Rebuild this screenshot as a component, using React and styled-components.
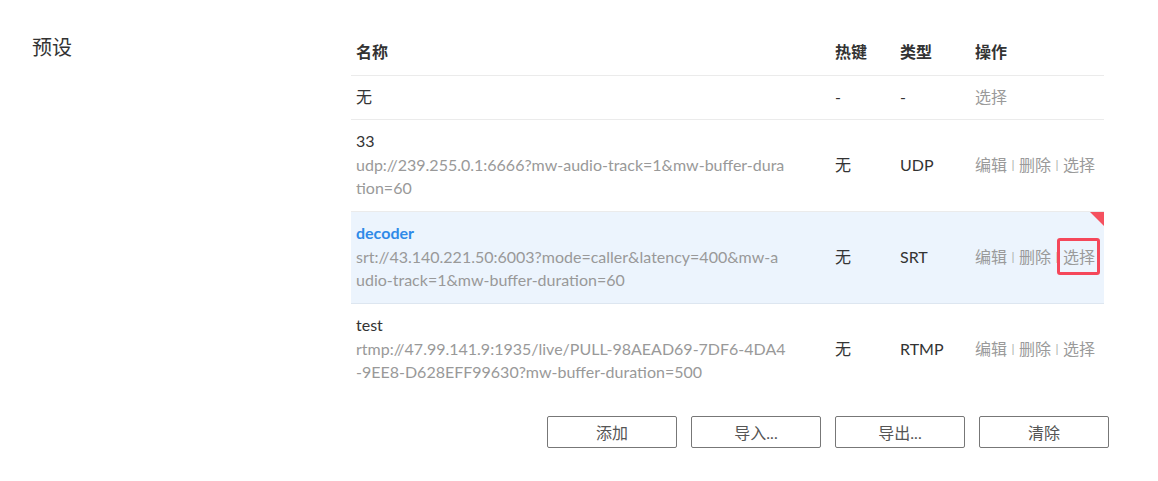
import React from "react";
import styled, { createGlobalStyle, css } from "styled-components";

const Global = createGlobalStyle`
  html, body { margin: 0; padding: 0; background: #fff; }
  body {
    font-family: Lato, "Noto Sans CJK SC", sans-serif;
    font-size: 16px;
    color: #333;
  }
`;

const Page = styled.div`
  display: flex;
  padding: 32px 0 0 32px;
  width: 1158px;
  box-sizing: border-box;
`;

const SectionLabel = styled.div`
  width: 319px;
  flex: none;
  font-size: 20px;
  line-height: 30px;
  color: #333;
`;

const Content = styled.div`
  width: 758px;
  display: flex;
  flex-direction: column;
`;

const Table = styled.div`
  width: 753px;
  display: flex;
  flex-direction: column;
`;

const Row = styled.div`
  position: relative;
  display: grid;
  grid-template-columns: 479px 65px 75px 134px;
  align-items: center;
  border-bottom: 1px solid #ebebeb;
  ${(p) =>
    p.$active &&
    css`
      background: #ecf4fd;
      border-bottom-color: #dde6f0;
    `}
  ${(p) =>
    p.$last &&
    css`
      border-bottom-color: transparent;
    `}
`;

const Corner = styled.span`
  position: absolute;
  top: 0;
  right: 0;
  width: 0;
  height: 0;
  border-top: 14px solid #f5515f;
  border-left: 14px solid transparent;
`;

const Cell = styled.div`
  padding: 9px 5px 11px;
  line-height: 23px;
  color: #333;
  white-space: nowrap;
`;

const HeadCell = styled(Cell)`
  padding: 8px 5px 12px;
  font-weight: 700;
`;

const NameCell = styled.div`
  padding: 9px 5px 12px;
  display: flex;
  flex-direction: column;
`;

const Name = styled.div`
  line-height: 23px;
  margin-bottom: 1px;
  color: ${(p) => (p.$active ? "#2f8ae8" : "#333")};
  font-weight: ${(p) => (p.$active ? 700 : 400)};
`;

const Url = styled.div`
  max-width: 430px;
  line-height: 23px;
  color: #999;
  word-break: break-all;
`;

const Actions = styled.div`
  padding: 9px 5px 11px;
  line-height: 23px;
  color: #9a9a9a;
  white-space: nowrap;
  display: flex;
  align-items: center;
`;

const Action = styled.span`
  position: relative;
  cursor: pointer;
  ${(p) =>
    p.$marked &&
    css`
      &::after {
        content: "";
        position: absolute;
        left: -6px;
        right: -5px;
        top: -7px;
        bottom: -7px;
        border: 3px solid #f5475a;
        border-radius: 3px;
      }
    `}
`;

const Sep = styled.span`
  font-size: 12px;
  color: #aaa;
  margin: 0 4.5px;
`;

const ButtonBar = styled.div`
  display: flex;
  justify-content: flex-end;
  gap: 14px;
  margin-top: 20px;
`;

const Button = styled.button`
  width: 130px;
  height: 32px;
  box-sizing: border-box;
  border: 1px solid #777;
  border-radius: 2px;
  background: #fff;
  color: #555;
  font-family: Lato, "Noto Sans CJK SC", sans-serif;
  font-size: 16px;
  padding: 0;
  cursor: pointer;
`;

const rows = [
  {
    name: "33",
    url: "udp://239.255.0.1:6666?mw-audio-track=1&mw-buffer-duration=60",
    key: "无",
    type: "UDP",
  },
  {
    name: "decoder",
    url: "srt://43.140.221.50:6003?mode=caller&latency=400&mw-audio-track=1&mw-buffer-duration=60",
    key: "无",
    type: "SRT",
    active: true,
  },
  {
    name: "test",
    url: "rtmp://47.99.141.9:1935/live/PULL-98AEAD69-7DF6-4DA4-9EE8-D628EFF99630?mw-buffer-duration=500",
    key: "无",
    type: "RTMP",
  },
];

export default function App() {
  return (
    <>
      <Global />
      <Page>
        <SectionLabel>预设</SectionLabel>
        <Content>
          <Table>
            <Row>
              <HeadCell>名称</HeadCell>
              <HeadCell>热键</HeadCell>
              <HeadCell>类型</HeadCell>
              <HeadCell>操作</HeadCell>
            </Row>
            <Row>
              <Cell>无</Cell>
              <Cell>-</Cell>
              <Cell>-</Cell>
              <Actions>
                <Action>选择</Action>
              </Actions>
            </Row>
            {rows.map((r, i) => (
              <Row key={r.name} $active={r.active} $last={i === rows.length - 1}>
                {r.active && <Corner />}
                <NameCell>
                  <Name $active={r.active}>{r.name}</Name>
                  <Url>{r.url}</Url>
                </NameCell>
                <Cell>{r.key}</Cell>
                <Cell>{r.type}</Cell>
                <Actions>
                  <Action>编辑</Action>
                  <Sep>|</Sep>
                  <Action>删除</Action>
                  <Sep>|</Sep>
                  <Action $marked={r.active}>选择</Action>
                </Actions>
              </Row>
            ))}
          </Table>
          <ButtonBar>
            <Button>添加</Button>
            <Button>导入...</Button>
            <Button>导出...</Button>
            <Button>清除</Button>
          </ButtonBar>
        </Content>
      </Page>
    </>
  );
}
